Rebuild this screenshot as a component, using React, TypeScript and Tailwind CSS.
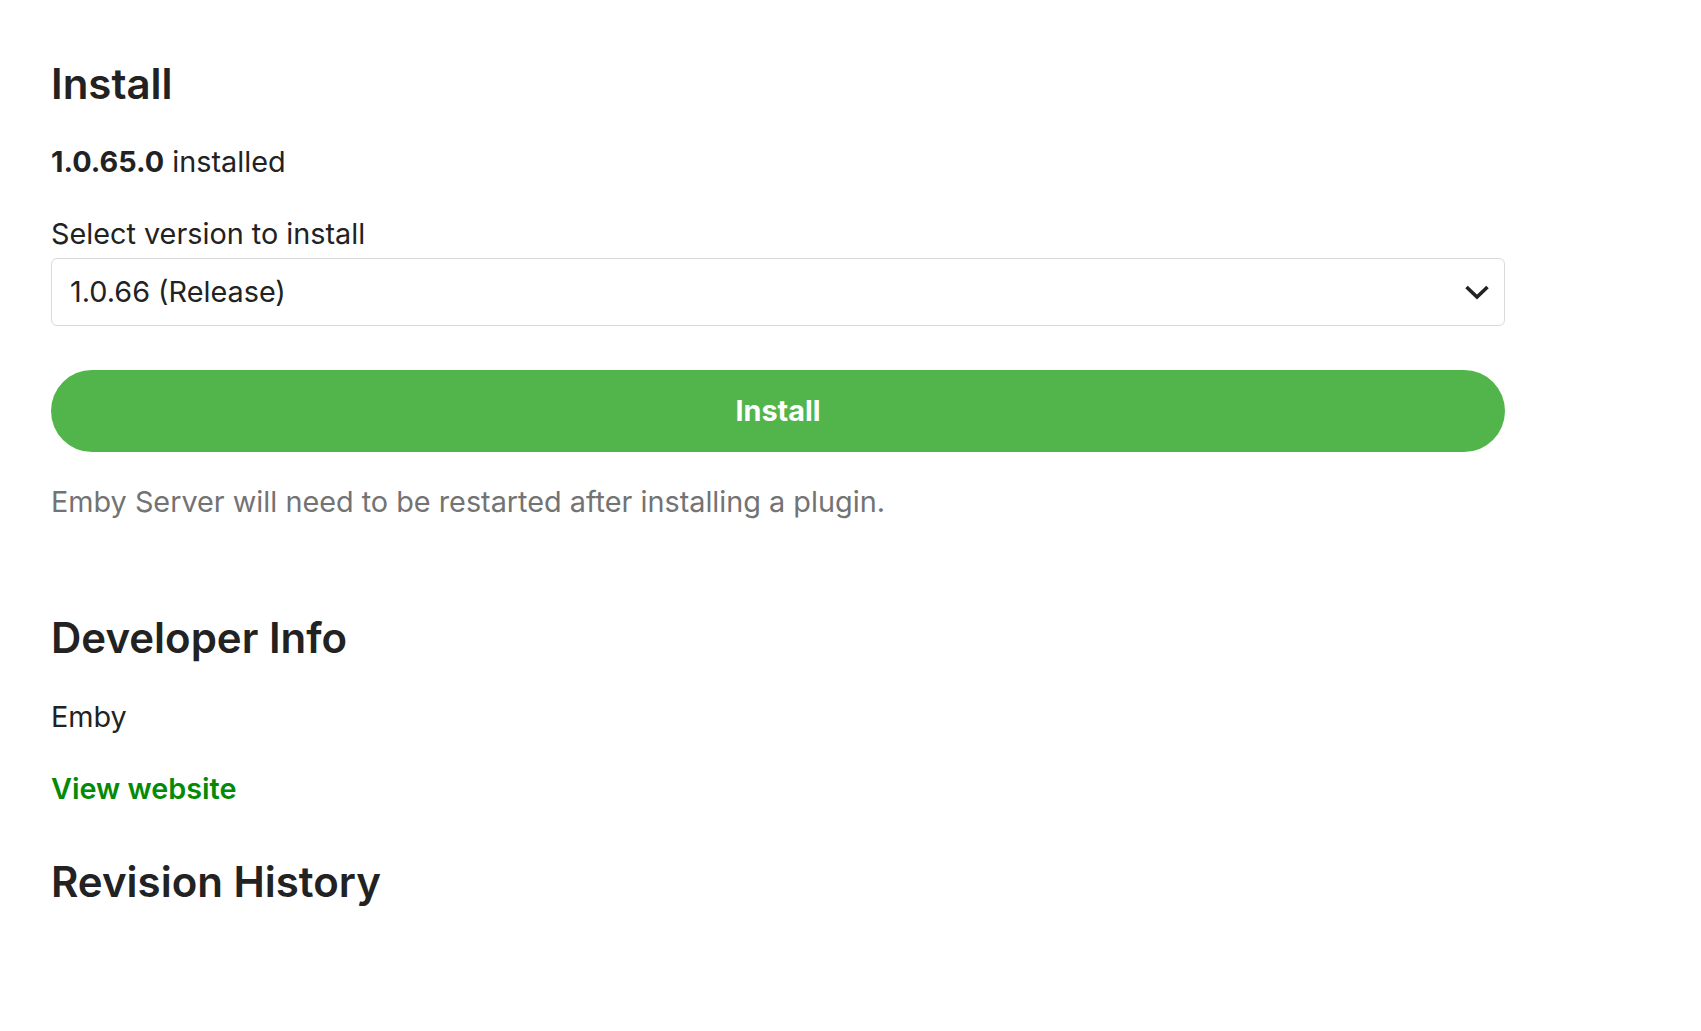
import React from "react";

export default function App() {
  return (
    <div
      className="min-h-[1031px] bg-white pl-[51px] pt-[59px] text-[#222222]"
      style={{ fontFamily: "Inter, 'Noto Sans', sans-serif" }}
    >
      <div className="w-[1454px]">
        <h2 className="text-[42px] leading-[50px] font-semibold">Install</h2>
        <p className="mt-[35px] text-[28.8px] leading-[36px]">
          <span className="font-bold">1.0.65.0</span> installed
        </p>
        <label className="mt-[36px] block text-[28.8px] leading-[36px]">
          Select version to install
        </label>
        <div className="mt-[6px] flex h-[68px] items-center justify-between rounded-[6px] border border-[#d9d9d9] bg-white pl-[18px] pr-[14px]">
          <span className="text-[28.8px] leading-[36px]">1.0.66 (Release)</span>
          <svg width="26" height="16" viewBox="0 0 26 16" fill="none">
            <polyline
              points="2.5,3 13,13 23.5,3"
              stroke="#222222"
              strokeWidth="3.6"
              strokeLinecap="butt"
              strokeLinejoin="miter"
            />
          </svg>
        </div>
        <button className="mt-[44px] flex h-[82px] w-full items-center justify-center rounded-full bg-[#52b54b] text-[28.8px] leading-[36px] font-bold text-white">
          Install
        </button>
        <p className="mt-[32px] text-[28.8px] leading-[36px] text-[#737373]">
          Emby Server will need to be restarted after installing a plugin.
        </p>
        <h2 className="mt-[93px] text-[42px] leading-[50px] font-semibold">
          Developer Info
        </h2>
        <p className="mt-[35.5px] text-[28.8px] leading-[36px]">Emby</p>
        <a className="mt-[36px] block text-[28.8px] leading-[36px] font-semibold text-[#058a05]">
          View website
        </a>
        <h2 className="mt-[50px] text-[42px] leading-[50px] font-semibold">
          Revision History
        </h2>
      </div>
    </div>
  );
}
